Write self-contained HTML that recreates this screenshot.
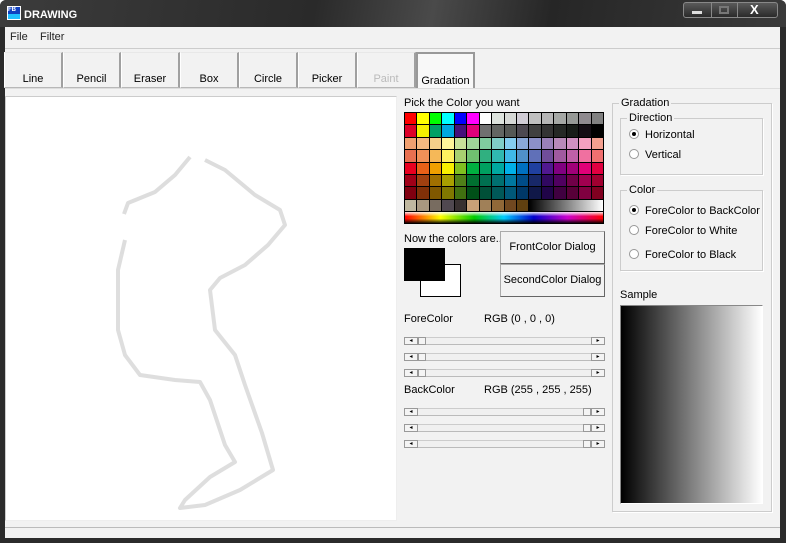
<!DOCTYPE html>
<html><head><meta charset="utf-8"><style>
*{margin:0;padding:0;box-sizing:border-box}
body{width:786px;height:543px;overflow:hidden;background:#fff;font-family:"Liberation Sans",sans-serif;font-size:11px;color:#000;position:relative}
.a{position:absolute}
.win{left:0;top:0;width:786px;height:543px;background:#2b2b2b;border-radius:6px 6px 0 0}
.title{left:0;top:0;width:786px;height:27px;background:linear-gradient(100deg,#3c3c3c 0%,#2a2a2a 40%,#4a4a4a 55%,#262626 70%,#3a3a3a 100%);border-radius:6px 6px 0 0}
.client{left:5px;top:27px;width:775px;height:511px;background:#f2f2f2}
.tab{top:52px;height:36px;border:1px solid #b8b8b8;border-top-color:#e8e8e8;border-left-color:#fff;border-right:2px solid #a0a0a0;background:#f2f2f2;text-align:center;padding-top:20px;font-size:11px}
.sb{left:404px;width:201px;height:8px;border-top:1px solid #ccc;border-bottom:1px solid #bbb;background:#f0f0f0}
.sb i{position:absolute;top:-1px;width:14px;height:8px;border:1px solid #999;background:#f4f4f4;font-style:normal;font-size:6px;line-height:6px;text-align:center}
.btn{left:500px;width:105px;height:33px;border:1px solid #aaa;border-right-color:#666;border-bottom-color:#666;background:#f2f2f2;text-align:center;line-height:31px;font-size:11px}
.grp{border:1px solid #ccc;box-shadow:1px 1px 0 #fff}
.lg{background:#f2f2f2;padding:0 2px;position:absolute;top:-7px;left:6px}
.rad{font-size:11px}
.rad b{display:inline-block;width:10px;height:10px;border:1px solid #999;border-radius:50%;background:#fff;vertical-align:-1px;margin-right:6px;position:relative}
.rad b.on:after{content:"";position:absolute;left:2px;top:2px;width:4px;height:4px;border-radius:50%;background:#000}
#pal{left:404px;top:112px;width:200px;height:100px;background:#000;display:grid;grid-template-columns:repeat(16,1fr);grid-template-rows:repeat(8,1fr);gap:1px;padding:1px}
</style></head><body>
<div class="a win"></div>
<div class="a title"></div>
<div class="a" style="left:7px;top:6px;width:14px;height:14px;background:linear-gradient(#1040c0 60%,#20c0ff 60%);border:1px solid #fff;color:#fff;font-size:6px;font-weight:bold;line-height:7px">FB</div>
<div class="a" style="left:24px;top:9px;color:#fff;font-size:11px;font-weight:bold">DRAWING</div>
<div class="a" style="left:683px;top:2px;width:95px;height:16px;border:1px solid #888;border-radius:3px;background:linear-gradient(#5a5a5a,#2a2a2a)"></div>
<div class="a" style="left:711px;top:2px;width:1px;height:16px;background:#888"></div>
<div class="a" style="left:737px;top:2px;width:1px;height:16px;background:#888"></div>
<div class="a" style="left:692px;top:11px;width:10px;height:3px;background:#ddd"></div>
<div class="a" style="left:719px;top:6px;width:10px;height:8px;border:2px solid #777"></div>
<div class="a" style="left:750px;top:2px;color:#fff;font-weight:bold;font-size:13px">X</div>
<div class="a client"></div>
<div class="a" style="left:10px;top:31px;font-size:11px;color:#222">File</div>
<div class="a" style="left:40px;top:31px;font-size:11px;color:#222">Filter</div>
<div class="a" style="left:5px;top:48px;width:775px;height:1px;background:#ccc"></div>
<div class="a tab" style="left:4px;width:59px">Line</div>
<div class="a tab" style="left:63px;width:58px">Pencil</div>
<div class="a tab" style="left:121px;width:59px">Eraser</div>
<div class="a tab" style="left:180px;width:59px">Box</div>
<div class="a tab" style="left:239px;width:59px">Circle</div>
<div class="a tab" style="left:298px;width:59px">Picker</div>
<div class="a tab" style="left:357px;width:59px;color:#bbb">Paint</div>
<div class="a tab" style="left:416px;width:59px;background:#f8f8f8;border:2px solid #999;border-bottom:none;padding-top:21px">Gradation</div>
<div class="a" style="left:5px;top:88px;width:775px;height:1px;background:#ddd"></div>
<div class="a" style="left:5px;top:96px;width:392px;height:425px;background:#fff;border:1px solid #ccc;border-right-color:#eee;border-bottom-color:#eee"></div>
<svg class="a" style="left:0;top:0" width="400" height="530"><g fill="none" stroke="#d8d8d8" stroke-width="4" stroke-linejoin="round" opacity=".85">
<polyline points="190,157 175,175 155,192 128,203 124,214"/>
<polyline points="125,240 118,270 118,330 125,355 140,375 175,380 200,382 210,400 225,445 235,462 210,477 185,500 180,508 205,505 240,490 273,470 262,433 245,385 235,355 215,330 210,290 220,278 245,265 268,245 285,225 280,210 255,195 225,170 205,160"/></g></svg>
<div class="a" style="left:404px;top:97px;font-size:11px">Pick the Color you want</div>
<div class="a" id="pal"></div>
<div class="a" style="left:404px;top:211px;width:200px;height:13px;border:1px solid #000;background:linear-gradient(rgba(255,255,255,.9),rgba(255,255,255,0) 40%,rgba(0,0,0,0) 60%,rgba(0,0,0,.9)),linear-gradient(90deg,#f00,#ff0 18%,#0c0 35%,#0cf 50%,#00c 65%,#c0c 82%,#f00)"></div>
<div class="a" style="left:404px;top:233px;font-size:11px">Now the colors are..</div>
<div class="a" style="left:420px;top:264px;width:41px;height:33px;background:#fff;border:1px solid #000"></div>
<div class="a" style="left:404px;top:248px;width:41px;height:33px;background:#000"></div>
<div class="a btn" style="top:231px">FrontColor Dialog</div>
<div class="a btn" style="top:264px">SecondColor Dialog</div>
<div class="a" style="left:404px;top:313px">ForeColor</div>
<div class="a" style="left:484px;top:313px">RGB (0 , 0 , 0)</div>
<div class="a" style="left:404px;top:384px">BackColor</div>
<div class="a" style="left:484px;top:384px">RGB (255 , 255 , 255)</div>
<div class="a sb" style="top:337px"><i style="left:0">◂</i><i style="left:14px;width:8px"></i><i style="right:0">▸</i></div>
<div class="a sb" style="top:353px"><i style="left:0">◂</i><i style="left:14px;width:8px"></i><i style="right:0">▸</i></div>
<div class="a sb" style="top:369px"><i style="left:0">◂</i><i style="left:14px;width:8px"></i><i style="right:0">▸</i></div>
<div class="a sb" style="top:408px"><i style="left:0">◂</i><i style="right:14px;width:8px"></i><i style="right:0">▸</i></div>
<div class="a sb" style="top:424px"><i style="left:0">◂</i><i style="right:14px;width:8px"></i><i style="right:0">▸</i></div>
<div class="a sb" style="top:440px"><i style="left:0">◂</i><i style="right:14px;width:8px"></i><i style="right:0">▸</i></div>
<div class="a grp" style="left:612px;top:103px;width:160px;height:409px"><span class="lg">Gradation</span></div>
<div class="a grp" style="left:620px;top:118px;width:143px;height:57px"><span class="lg">Direction</span></div>
<div class="a rad" style="left:629px;top:129px"><b class="on"></b>Horizontal</div>
<div class="a rad" style="left:629px;top:149px"><b></b>Vertical</div>
<div class="a grp" style="left:620px;top:190px;width:143px;height:81px"><span class="lg">Color</span></div>
<div class="a rad" style="left:629px;top:205px"><b class="on"></b>ForeColor to BackColor</div>
<div class="a rad" style="left:629px;top:225px"><b></b>ForeColor to White</div>
<div class="a rad" style="left:629px;top:249px"><b></b>ForeColor to Black</div>
<div class="a" style="left:620px;top:289px">Sample</div>
<div class="a" style="left:620px;top:305px;width:143px;height:199px;border:1px solid #888;border-right-color:#fff;border-bottom-color:#fff;background:linear-gradient(90deg,#000,#fff)"></div>
<div class="a" style="left:5px;top:527px;width:775px;height:1px;background:#bbb"></div>
<script>
var c="#ff0000 #ffff00 #00ff00 #00ffff #0000ff #ff00ff #ffffff #dde3dd #d5d8d5 #d0ccd5 #c0c0c0 #b5b5b5 #a5a8a5 #969996 #8f8a8f #808080 #dd0029 #f5ef00 #00a065 #00a8e0 #45107a #e0007a #707070 #626562 #555855 #4c4850 #404040 #333333 #252825 #181c18 #140d14 #000000 #f0a070 #f5b880 #f5d08a #fff59a #c8e29a #a0d69a #80cc9f #80cec8 #85ccf0 #8aa8d8 #8c90c8 #9a80b8 #b88ab8 #d090c0 #f4a0c0 #f4a090 #e87050 #f09058 #f5b858 #fff060 #a8d070 #70c070 #30b080 #30b8b0 #40b8e8 #5090c8 #6070b8 #704d9a #a05aa0 #c060a8 #f070a0 #f07070 #e80020 #e86018 #f0a000 #f8f000 #80c020 #00b040 #00a060 #00a8a0 #00b0e8 #0070c0 #2040a0 #501890 #800080 #a00078 #e00078 #e00040 #a00018 #a04010 #a07000 #a8a000 #508018 #007030 #007050 #007070 #0078a0 #004c88 #182868 #300860 #500060 #700048 #a00050 #a00030 #800010 #803008 #805800 #807800 #407010 #005018 #005038 #005858 #005878 #003868 #101848 #200448 #400040 #580038 #800040 #800020 #c0b8a0 #a89880 #786c60 #504850 #383030 #c8a078 #a08058 #906838 #704820 #604010".split(" ");
var p=document.getElementById("pal"),h="";
c.forEach(function(x){h+='<div style="background:'+x+'"></div>'});
h+='<div style="grid-column:11/17;background:linear-gradient(90deg,#000,#fff)"></div>';
p.innerHTML=h;
</script>
</body></html>
